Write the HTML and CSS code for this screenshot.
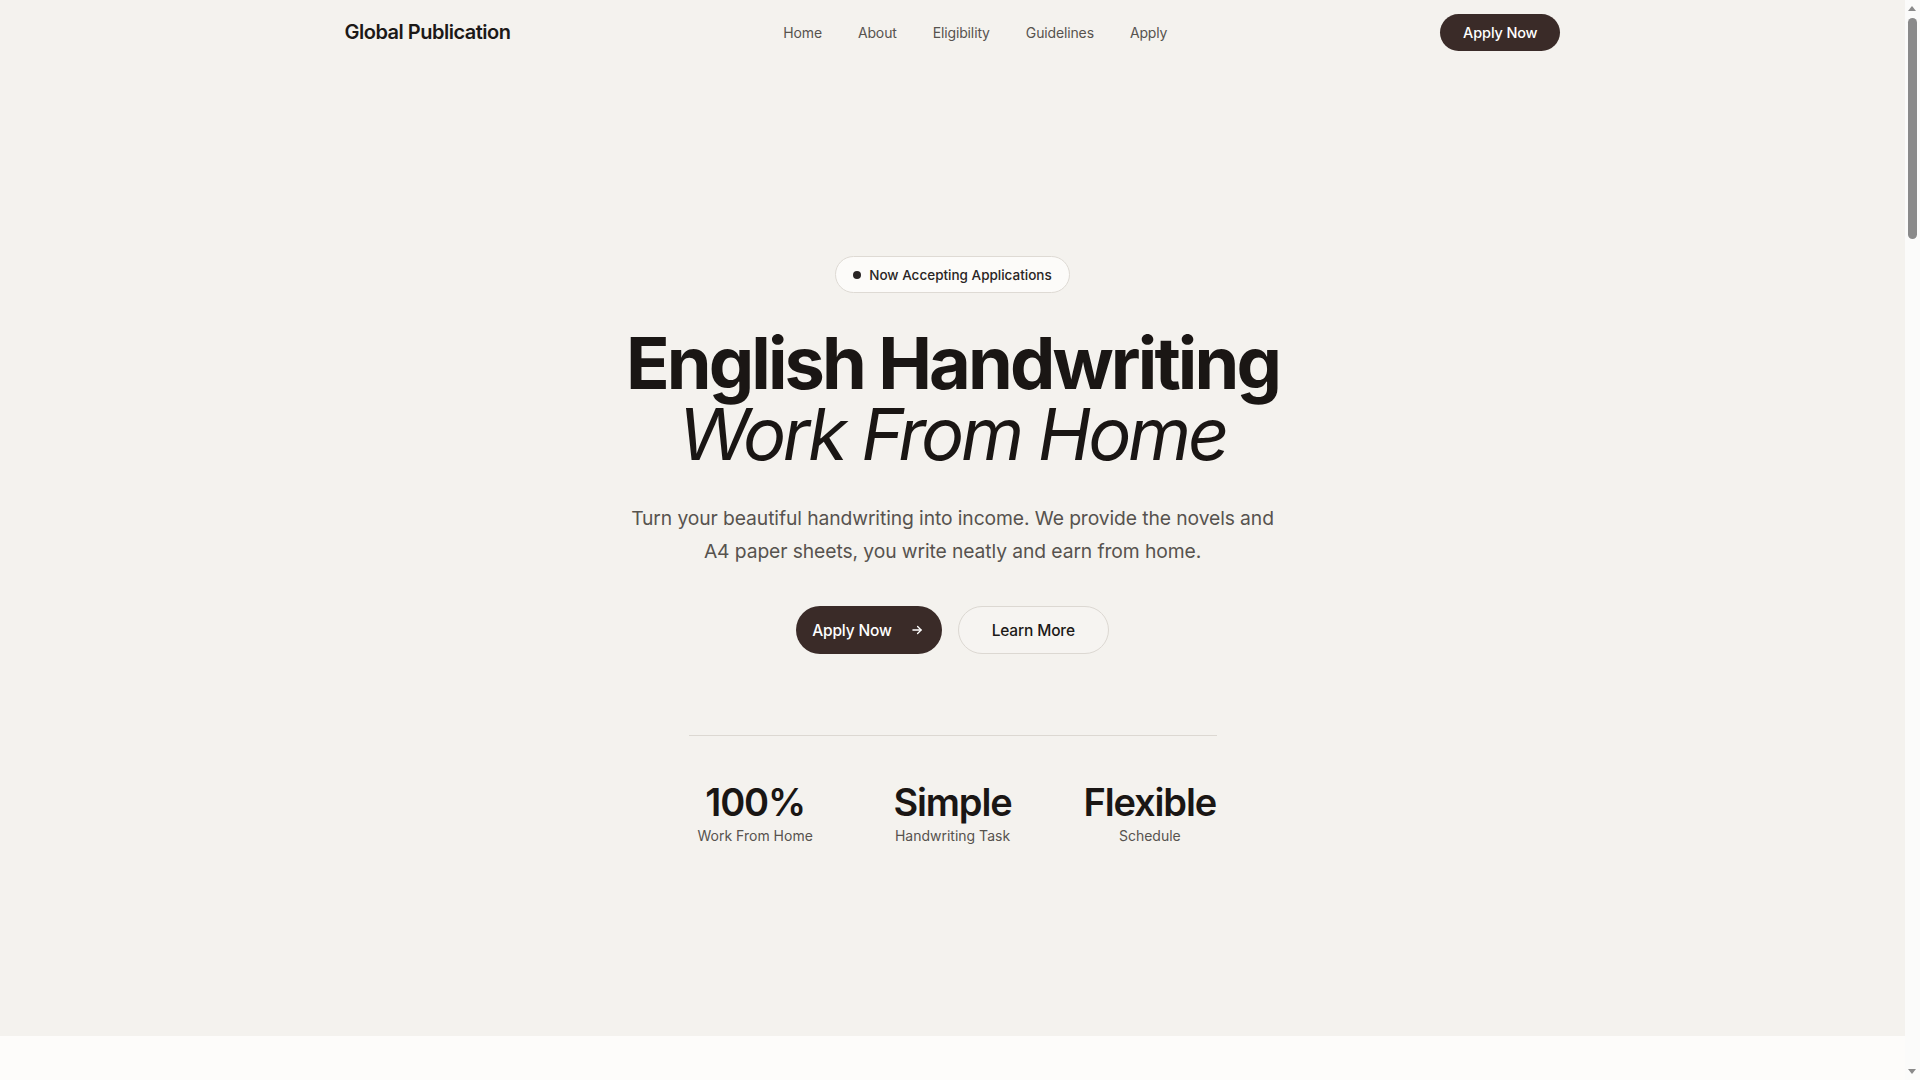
FILE: index.html
```html
<!DOCTYPE html>
<html lang="en">
<head>
<meta charset="utf-8">
<title>Global Publication - English Handwriting Work From Home</title>
<link rel="stylesheet" href="styles.css">
</head>
<body>
<header class="site-header">
  <div class="container header-inner">
    <a class="logo" href="#">Global Publication</a>
    <nav class="nav">
      <a href="#">Home</a>
      <a href="#">About</a>
      <a href="#">Eligibility</a>
      <a href="#">Guidelines</a>
      <a href="#">Apply</a>
    </nav>
    <a class="btn-nav" href="#">Apply Now</a>
  </div>
</header>
<main>
  <section class="hero">
    <div class="badge"><span class="dot"></span>Now Accepting Applications</div>
    <h1 class="title"><span class="line">English Handwriting</span><em class="line">Work From Home</em></h1>
    <p class="lead">Turn your beautiful handwriting into income. We provide the novels and A4 paper sheets, you write neatly and earn from home.</p>
    <div class="actions">
      <a class="btn btn-primary" href="#">Apply Now
        <svg class="arrow" width="14" height="14" viewBox="0 0 24 24" fill="none" stroke="currentColor" stroke-width="2.2" stroke-linecap="round" stroke-linejoin="round"><path d="M5 12h14"/><path d="M13 6l6 6-6 6"/></svg>
      </a>
      <a class="btn btn-outline" href="#">Learn More</a>
    </div>
    <div class="stats">
      <div class="stat"><div class="stat-num">100%</div><div class="stat-label">Work From Home</div></div>
      <div class="stat"><div class="stat-num">Simple</div><div class="stat-label">Handwriting Task</div></div>
      <div class="stat"><div class="stat-num">Flexible</div><div class="stat-label">Schedule</div></div>
    </div>
  </section>
  <section class="next"></section>
</main>
<div class="scrollbar" aria-hidden="true">
  <span class="sb-up"></span>
  <span class="sb-thumb"></span>
  <span class="sb-down"></span>
</div>
</body>
</html>
```
FILE: styles.css
```css
* { box-sizing: border-box; }
html, body { margin: 0; padding: 0; }
body {
  margin-right: 15px;
  background: #f4f2ee;
  color: #1c1917;
  font-family: Inter, "Liberation Sans", sans-serif;
  -webkit-font-smoothing: antialiased;
}
a { text-decoration: none; color: inherit; }

.container { max-width: 1216px; margin: 0 auto; }

.site-header { height: 64px; }
.header-inner {
  height: 64px;
  display: flex;
  align-items: center;
  justify-content: space-between;
}
.logo {
  font-size: 20px;
  font-weight: 600;
  letter-spacing: -0.025em;
  color: #1c1917;
}
.nav { display: flex; gap: 36px; }
.nav a { font-size: 14px; color: #57534e; letter-spacing: -0.01em; }
.btn-nav {
  height: 37px;
  padding: 0 23px;
  display: flex;
  align-items: center;
  border-radius: 999px;
  background: #3a2b28;
  color: #fff;
  font-size: 14.5px;
  font-weight: 500;
  letter-spacing: -0.01em;
}

.hero {
  height: 972px;
  display: flex;
  flex-direction: column;
  align-items: center;
  justify-content: center;
  text-align: center;
}
.badge {
  display: inline-flex;
  align-items: center;
  gap: 8px;
  height: 37px;
  padding: 0 17px;
  border: 1px solid #dedad4;
  border-radius: 999px;
  background: #fcfbf9;
  font-size: 13.5px;
  font-weight: 500;
  color: #292524;
}
.dot { width: 8px; height: 8px; border-radius: 50%; background: #292524; }

.title {
  margin: 34px 0 0;
  font-size: 72px;
  font-weight: 700;
  letter-spacing: -0.04em;
  color: #1a1614;
}
.title .line { display: block; line-height: 71px; }
.title em { font-style: italic; font-weight: 400; letter-spacing: -0.045em; }

.lead {
  margin: 33px 0 0;
  max-width: 670px;
  font-size: 19.3px;
  line-height: 33px;
  color: #57534e;
  letter-spacing: -0.005em;
}

.actions { margin-top: 38px; display: flex; gap: 16px; }
.btn {
  height: 48px;
  display: inline-flex;
  align-items: center;
  border-radius: 999px;
  font-size: 15.5px;
  font-weight: 500;
  letter-spacing: -0.01em;
}
.btn-primary {
  padding: 0 18px 0 16px;
  gap: 18px;
  background: #3a2b28;
  color: #fff;
}
.btn-outline {
  padding: 0 33px;
  border: 1px solid #dcd8d2;
  background: #f6f4f1;
  color: #1c1917;
}

.stats {
  margin-top: 81px;
  width: 528px;
  padding-top: 44px;
  border-top: 1px solid #dcd8d2;
  display: grid;
  grid-template-columns: repeat(3, 1fr);
  gap: 64px;
}
.stat-num {
  font-size: 38px;
  line-height: 44px;
  font-weight: 600;
  letter-spacing: -0.03em;
  color: #1a1614;
}
.stat-label {
  margin-top: 3px;
  font-size: 14px;
  color: #57534e;
}

.next { height: 600px; background: #fdfcfa; }

.scrollbar {
  position: fixed;
  top: 0;
  right: 0;
  width: 15px;
  height: 100vh;
  background: #fbfbfa;
}
.sb-up, .sb-down {
  position: absolute;
  left: 3px;
  width: 0;
  height: 0;
  border-left: 4.5px solid transparent;
  border-right: 4.5px solid transparent;
}
.sb-up { top: 6px; border-bottom: 5px solid #8a8a8a; }
.sb-down { bottom: 6px; border-top: 5px solid #8a8a8a; }
.sb-thumb {
  position: absolute;
  top: 18px;
  left: 3px;
  width: 9px;
  height: 221px;
  border-radius: 5px;
  background: #8a8a8a;
}
```
